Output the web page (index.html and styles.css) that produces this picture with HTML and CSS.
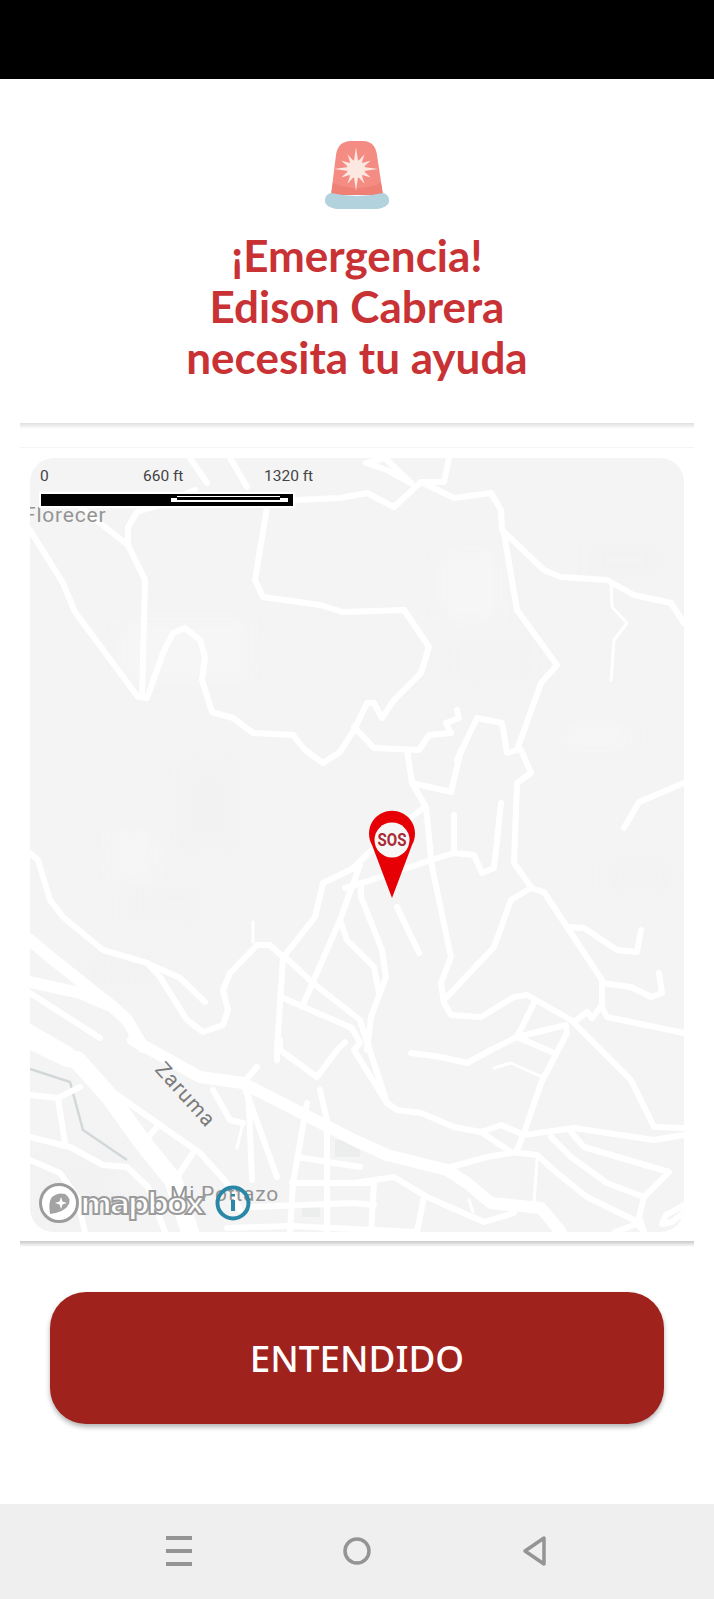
FILE: index.html
```html
<!DOCTYPE html>
<html lang="es">
<head>
    <meta charset="UTF-8">
    <meta name="viewport" content="width=device-width, initial-scale=1.0">
    <title>Emergencia</title>
    <link rel="stylesheet" href="styles.css">
</head>
<body>
    <div class="status-bar"></div>

    <main class="alert">
        <header class="alert-head">
            <svg class="siren" viewBox="0 0 66 72" width="66" height="72">
                <path class="siren-dome" d="M7 56 L12 16 Q14 2 27 2 H39 Q51 2 53 16 L59 56 Z"/>
                <path class="siren-glow" d="M7 56 L9 44 Q33 54 57 44 L59 56 Z"/>
                <polygon class="siren-burst" transform="translate(32 30)" points="22,0 7.7,2.1 14.7,8.5 5.7,5.7 8.5,14.7 2.1,7.7 0,22 -2.1,7.7 -8.5,14.7 -5.7,5.7 -14.7,8.5 -7.7,2.1 -22,0 -7.7,-2.1 -14.7,-8.5 -5.7,-5.7 -8.5,-14.7 -2.1,-7.7 0,-22 2.1,-7.7 8.5,-14.7 5.7,-5.7 14.7,-8.5 7.7,-2.1"/>
                <circle class="siren-burst" cx="32" cy="30" r="9"/>
                <path class="siren-base" d="M7 54 Q33 60 59 54 Q64 55 65 60 V63 Q64 68 54 70 H12 Q2 68 1 63 V60 Q2 55 7 54 Z"/>
            </svg>
            <h1 class="alert-title">¡Emergencia!<br>Edison Cabrera<br>necesita tu ayuda</h1>
        </header>

        <div class="rule rule-top"></div>
        <div class="rule-faint"></div>

        <section class="map">
            <svg class="map-art" viewBox="30 458 654 774" width="654" height="774">
                <g class="patches">
                    <rect class="patch-light" x="120" y="620" width="130" height="60"/>
                    <rect class="patch-dark" x="180" y="760" width="60" height="90"/>
                    <rect class="patch-light" x="110" y="830" width="45" height="50"/>
                    <rect class="patch-dark" x="130" y="890" width="70" height="30"/>
                    <rect class="patch-dark" x="90" y="960" width="60" height="25"/>
                    <rect class="patch-light" x="440" y="550" width="60" height="70"/>
                    <rect class="patch-dark" x="590" y="545" width="70" height="30"/>
                    <rect class="patch-dark" x="460" y="640" width="70" height="40"/>
                    <rect class="patch-dark" x="610" y="860" width="60" height="30"/>
                    <rect class="patch-light" x="560" y="725" width="70" height="25"/>
                    <rect class="patch-dark" x="30" y="1150" width="90" height="82"/>
                </g>
                <g class="blocks">
                    <rect x="335" y="1140" width="25" height="17"/>
                    <rect x="302" y="1203" width="18" height="14"/>
                </g>

                <polyline class="water" points="30,1069 70,1082 83,1130 127,1160"/>

                <g class="roads">
                    <g class="road thin">
                        <polyline points="611,583 612,607 627,623 614,640 611,680"/>
                        <polyline points="253,922 253,942"/>
                        <polyline points="494,1068 511,1063 542,1077"/>
                        <polyline points="537,1160 534,1203"/>
                        <polyline points="469,1200 473,1212"/>
                        <polyline points="243,1123 237,1148"/>
                    </g>

                    <g class="road">
                        <polyline points="30,530 63,583 75,612 138,697 147,698 163,653 173,633 185,628 200,640 205,657 202,680 212,712 233,718 253,733 293,735 305,750 323,763 340,752 354,730 367,703 374,703 382,718 394,700 421,673 429,647 404,610 343,612 320,605 263,597 255,580 267,507"/>
                        <polyline points="142,697 145,580 128,545 100,523 78,505"/>
                        <polyline points="128,545 128,527 137,512 160,505 195,490"/>
                        <polyline points="190,458 207,483"/>
                        <polyline points="230,458 247,487"/>
                        <polyline points="297,500 340,498 367,493 394,507 421,482 444,482 449,458"/>
                        <polyline points="421,482 454,498 491,493 501,510 502,530 544,570 561,577 607,580 634,595 671,603 684,623"/>
                        <polyline points="504,533 517,610 557,665 541,683 517,750 507,753 502,723 477,718 457,760"/>
                        <polyline points="366,463 387,470 411,483"/>
                        <polyline points="366,463 385,458 411,483"/>
                        <polyline points="457,710 459,718 446,723 451,733 429,735 419,750 374,748 354,727"/>
                        <polyline points="407,750 412,783 426,807 432,867 451,957 441,983 444,1003 451,1015 481,1017 514,997 527,995 571,1020 601,1050 631,1080 654,1127 684,1128"/>
                        <polyline points="412,783 451,792 461,750"/>
                        <polyline points="454,815 454,853"/>
                        <polyline points="345,888 362,883 431,860 454,853 474,855 482,873 494,868 501,803"/>
                        <polyline points="354,867 372,850 424,807"/>
                        <polyline points="361,883 361,897 382,950 386,977 371,1017 367,1050"/>
                        <polyline points="397,907 419,953"/>
                        <polyline points="444,1000 494,947 511,900 531,888 544,892 567,927 602,980 602,1007 607,1017 684,1033"/>
                        <polyline points="567,927 584,928 617,950 637,952 641,930"/>
                        <polyline points="602,983 631,987 651,997 662,993 659,973"/>
                        <polyline points="574,1022 587,1012 592,1018 602,1005"/>
                        <polyline points="521,750 531,773 517,783 514,863 531,887"/>
                        <polyline points="684,783 639,802 624,828"/>
                        <polyline points="534,1003 517,1037 491,1050 467,1063 441,1057 411,1053"/>
                        <polyline points="517,1037 566,1025 567,1033 541,1083 524,1133 517,1150"/>
                        <polyline points="517,1037 554,1053"/>
                        <polyline points="30,853 38,860 50,900 63,917 103,950 147,963 160,977 187,1020 203,1032 223,1025 228,1010 223,990 230,973 257,945 270,945 283,957 277,1050 277,1060"/>
                        <polyline points="147,963 180,978 205,1002"/>
                        <polyline points="285,955 315,917 323,883 360,865"/>
                        <polyline points="360,865 340,920 302,1007"/>
                        <polyline points="340,920 347,940 374,967 379,993"/>
                        <polyline points="285,957 313,983 360,1020 387,1103 397,1110 421,1113 454,1127 481,1132 501,1125 524,1135 574,1128 654,1140 684,1135"/>
                        <polyline points="283,998 352,1028 360,1043 354,1050 387,1103"/>
                        <polyline points="30,993 100,1038"/>
                        <polyline points="30,1027 70,1050"/>
                        <polyline points="280,1040 280,1050 317,1077 337,1050 345,1042"/>
                        <polyline points="110,1090 200,1153 227,1183 240,1210"/>
                        <polyline points="30,1137 70,1147 103,1165 127,1167 148,1187 165,1232"/>
                        <polyline points="30,1160 60,1173 77,1197 85,1232"/>
                        <polyline points="58,1098 65,1143"/>
                        <polyline points="30,1095 58,1098 80,1087"/>
                        <polyline points="157,1127 143,1143"/>
                        <polyline points="193,1153 173,1183"/>
                        <polyline points="213,1090 230,1120 243,1123"/>
                        <polyline points="257,1067 243,1083 277,1177"/>
                        <polyline points="248,1083 252,1180"/>
                        <polyline points="307,1103 293,1183 290,1232"/>
                        <polyline points="320,1090 327,1120 327,1232"/>
                        <polyline points="297,1157 360,1167"/>
                        <polyline points="292,1183 374,1183"/>
                        <polyline points="250,1207 354,1203 374,1205"/>
                        <polyline points="227,1228 290,1226 417,1232"/>
                        <polyline points="481,1132 511,1152 537,1155 557,1173 587,1197 634,1220 644,1232"/>
                        <polyline points="511,1153 487,1157 451,1167"/>
                        <polyline points="551,1137 571,1157 607,1183 644,1197 669,1172 584,1147 571,1132"/>
                        <polyline points="644,1197 639,1217 644,1232"/>
                        <polyline points="354,1183 394,1177 427,1197 484,1222 514,1213"/>
                        <polyline points="374,1183 371,1232"/>
                        <polyline points="424,1197 417,1232"/>
                        <polyline points="634,1225 615,1232"/>
                        <polyline points="684,1205 666,1215 662,1224 672,1222 684,1212"/>
                    </g>

                    <g class="road wide">
                        <polyline points="30,940 50,957 113,1007"/>
                        <polyline points="30,982 80,993 113,1007 127,1020 143,1047"/>
                        <polyline points="133,1040 200,1077 243,1083 354,1140 387,1155 447,1170 467,1183 491,1203 541,1208 561,1232"/>
                    </g>
                    <g class="road wider">
                        <polyline points="30,1040 67,1058 77,1060 110,1097 143,1143 173,1180 190,1232"/>
                    </g>
                </g>

                <text class="label" x="24" y="522">Florecer</text>
                <text class="label label-dark" transform="translate(154 1070) rotate(48)">Zaruma</text>
                <text class="label" x="170" y="1201">Mi Pottazo</text>

                <g class="pin">
                    <path class="pin-body" d="M392 898 L372 845 A23 23 0 1 1 412 845 Z"/>
                    <circle class="pin-hole" cx="392" cy="840" r="17.5"/>
                    <text class="pin-text" x="392" y="846" textLength="29" lengthAdjust="spacingAndGlyphs">SOS</text>
                </g>
            </svg>

            <div class="scale">
                <div class="scale-labels">
                    <span class="scale-zero">0</span>
                    <span class="scale-mid">660 ft</span>
                    <span class="scale-end">1320 ft</span>
                </div>
                <div class="scale-bar">
                    <div class="scale-solid"></div>
                    <div class="scale-striped"></div>
                </div>
            </div>

            <div class="mapbox">
                <svg class="mapbox-mark" viewBox="0 0 42 42" width="42" height="42">
                    <circle class="mapbox-ring" cx="21" cy="21" r="18.5"/>
                    <path class="mapbox-drop" d="M12 32 Q10 20 14 15 Q20 10 27 12 Q33 16 31 22 Q27 30 12 32 Z"/>
                    <polygon class="mapbox-star" points="23,15 24.5,19.5 29,21 24.5,22.5 23,27 21.500,22.500 17,21 21.500,19.500"/>
                </svg>
                <span class="mapbox-word">mapbox</span>
                <svg class="info" viewBox="0 0 38 38" width="38" height="38">
                    <circle cx="19" cy="19" r="15.500"/>
                    <path d="M19 16 V27"/>
                    <path d="M19 10 V12.500"/>
                </svg>
            </div>
        </section>

        <div class="rule rule-bottom"></div>

        <div class="actions">
            <button class="confirm">ENTENDIDO</button>
        </div>
    </main>

    <nav class="nav-bar">
        <svg class="nav-icon" viewBox="0 0 26 30" width="26" height="30">
            <path d="M0 2 H26 M0 15 H26 M0 28 H26"/>
        </svg>
        <svg class="nav-icon nav-circle" viewBox="0 0 30 30" width="30" height="30">
            <circle cx="15" cy="15" r="12"/>
        </svg>
        <svg class="nav-icon nav-back" viewBox="0 0 26 32" width="26" height="32">
            <path d="M22 3 V29 L3 16 Z"/>
        </svg>
    </nav>
</body>
</html>
```

FILE: styles.css
```css
* {
    box-sizing: border-box;
}
body {
    margin: 0;
    width: 714px;
    height: 1599px;
    overflow: hidden;
    background-color: #fff;
    font-family: "Noto Sans", sans-serif;
}
.status-bar {
    height: 79px;
    background-color: #000;
}
.alert-head {
    height: 344px;
    padding-top: 60px;
    text-align: center;
}
.siren {
    display: block;
    margin: 0 auto;
    filter: blur(0.6px);
}
.siren-dome {
    fill: #f48c83;
}
.siren-glow {
    fill: #ee8076;
}
.siren-burst {
    fill: #fde8e1;
}
.siren-base {
    fill: #b2d2de;
}
.alert-title {
    margin: 19px 0 0;
    font-family: Lato, sans-serif;
    font-size: 44px;
    font-weight: 700;
    line-height: 51px;
    color: #c93234;
}
.rule {
    margin: 0 20px;
    height: 6px;
}
.rule-top {
    background: linear-gradient(#dfdfdf, #fff);
}
.rule-faint {
    margin: 18px 20px 10px;
    height: 1px;
    background-color: #f4f4f4;
}
.rule-bottom {
    margin-top: 9px;
    background: linear-gradient(#c9c9c9, #fff);
}
.map {
    position: relative;
    margin: 0 30px;
    height: 774px;
    overflow: hidden;
    border-radius: 24px;
    background-color: #f4f4f4;
}
.map-art {
    display: block;
}
.patches {
    filter: blur(8px);
}
.patch-light {
    fill: #f6f6f6;
}
.patch-dark {
    fill: #f2f2f2;
}
.blocks {
    fill: #eceeee;
}
.water {
    fill: none;
    stroke: #d2d8da;
    stroke-width: 2.5;
}
.roads {
    filter: blur(0.4px);
}
.road {
    fill: none;
    stroke: #fff;
    stroke-width: 6;
    stroke-linecap: round;
    stroke-linejoin: round;
}
.thin {
    stroke-width: 3;
}
.wide {
    stroke-width: 12;
}
.wider {
    stroke-width: 18;
}
.label {
    font-family: Roboto, sans-serif;
    font-size: 21px;
    letter-spacing: 0.8px;
    fill: #949494;
}
.label-dark {
    fill: #7b7b7b;
    letter-spacing: 1px;
}
.pin-body {
    fill: #e60006;
}
.pin-hole {
    fill: #f7f7f7;
}
.pin-text {
    font-family: Roboto, sans-serif;
    font-size: 18px;
    font-weight: 700;
    text-anchor: middle;
    fill: #aa2a35;
}
.scale {
    position: absolute;
    top: 9px;
    left: 9px;
    width: 290px;
}
.scale-labels {
    position: relative;
    height: 25px;
    font-family: Roboto, sans-serif;
    font-size: 15.5px;
    line-height: 18px;
    color: #444;
}
.scale-labels span {
    position: absolute;
    top: 0;
}
.scale-zero {
    left: 1px;
}
.scale-mid {
    left: 104px;
}
.scale-end {
    left: 225px;
}
.scale-bar {
    display: flex;
    width: 256px;
    height: 16px;
    border: 2px solid #fff;
}
.scale-solid {
    width: 130px;
    background-color: #000;
}
.scale-striped {
    position: relative;
    flex: 1;
    background:
        linear-gradient(#000 0 2px, #fff 2px 3px, #000 3px 6px, #fff 6px 8px, #000 8px 12px);
    border-left: 6px solid #000;
    border-right: 13px solid #000;
}
.scale-striped::before,
.scale-striped::after {
    content: "";
    position: absolute;
    top: 4px;
    height: 4px;
    background-color: #fff;
}
.scale-striped::before {
    left: -6px;
    width: 6px;
}
.scale-striped::after {
    right: -8px;
    width: 8px;
}
.mapbox {
    position: absolute;
    left: 8px;
    bottom: 8px;
    display: flex;
    align-items: center;
    height: 42px;
}
.mapbox-ring {
    fill: #fff;
    stroke: #9c9c9c;
    stroke-width: 3;
}
.mapbox-drop {
    fill: #a3a3a3;
}
.mapbox-star {
    fill: #fff;
}
.mapbox-word {
    margin-left: 0;
    font-family: "DejaVu Sans", sans-serif;
    font-size: 31px;
    font-weight: 700;
    letter-spacing: -2.8px;
    color: #fff;
    -webkit-text-stroke: 2px #9c9c9c;
    line-height: 42px;
}
.info {
    margin-left: 12px;
    fill: none;
    stroke: #2a87a8;
    stroke-width: 4;
}
.actions {
    padding: 45px 50px 0;
}
.confirm {
    display: block;
    width: 100%;
    height: 132px;
    border: none;
    border-radius: 36px;
    background-color: #a0221c;
    box-shadow: 0 3px 5px rgba(0, 0, 0, 0.3);
    font-family: "Noto Sans", sans-serif;
    font-size: 36.8px;
    font-weight: 500;
    color: #fff;
}
.nav-bar {
    position: absolute;
    top: 1504px;
    left: 0;
    width: 714px;
    height: 95px;
    display: flex;
    align-items: center;
    justify-content: center;
    gap: 150px;
    padding-bottom: 2px;
    background-color: #efefef;
}
.nav-icon {
    fill: none;
    stroke: #949494;
    stroke-width: 4;
}
.nav-circle {
    stroke-width: 3.5;
}
.nav-back {
    stroke-width: 3.5;
    stroke-linejoin: round;
}
```
